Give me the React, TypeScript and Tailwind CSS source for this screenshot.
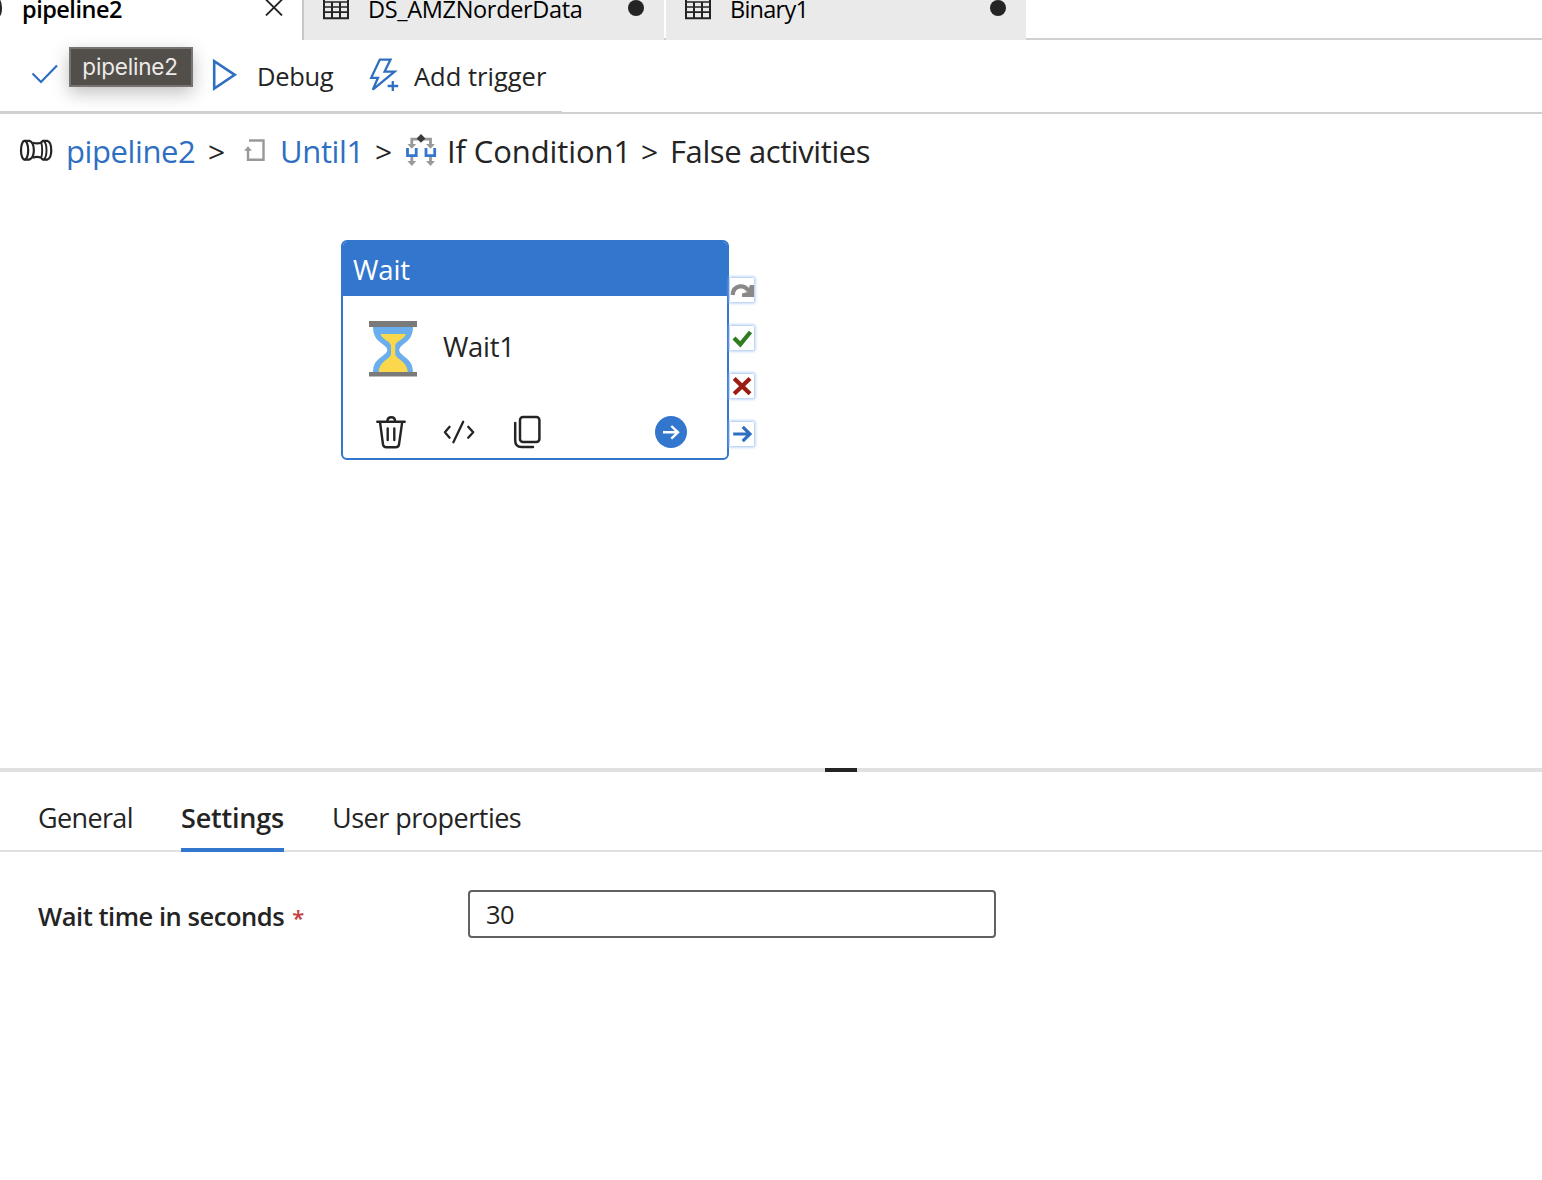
import type { ReactNode } from 'react'

const ink = '#242424'
const blue = '#2f6fc1'

function TableIcon() {
  return (
    <svg className="block h-5 w-[26px] shrink-0" viewBox="0 0 26 20" fill="none" stroke={ink}>
      <path d="M1 0V18.2H25V0" strokeWidth="2" />
      <path d="M0 2H26M1 7H25M1 12.2H25" strokeWidth="1.7" />
      <path d="M9 2V18M17 2V18" strokeWidth="2" />
    </svg>
  )
}

function FileTab({ label, tracking }: { label: string; tracking: string }) {
  return (
    <div className="flex h-10 w-[360px] items-start bg-[#eaeaea] pr-5 pl-[19px]">
      <TableIcon />
      <span className={`ml-[19px] h-[18px] flex-1 text-[23.5px] leading-[18px] text-black ${tracking}`}>{label}</span>
      <span className="size-4 rounded-full bg-[#242424]" />
    </div>
  )
}

function TabBar() {
  return (
    <div className="flex h-10">
      <div className="flex w-[302px] items-start">
        <svg className="block h-5 w-[22px]" viewBox="0 0 22 20" fill="none" stroke={ink} strokeWidth="2">
          <path d="M-2 -1C2 2 2 14 -2 17" />
        </svg>
        <span className="h-[18px] flex-1 text-[23.5px] leading-[18px] font-semibold tracking-[-0.5px] text-black">
          pipeline2
        </span>
        <svg className="mr-[19px] block h-4 w-[18px]" viewBox="0 0 18 16" fill="none" stroke={ink} strokeWidth="1.8">
          <path d="M1 -0.5L17 15.5M17 -0.5L1 15.5" />
        </svg>
      </div>
      <div className="w-0.5 bg-[#c8c8c8]" />
      <FileTab label="DS_AMZNorderData" tracking="tracking-[-0.33px]" />
      <div className="w-0.5 border-b-2 border-[#d0d0d0]" />
      <FileTab label="Binary1" tracking="tracking-[-0.75px]" />
      <div className="flex-1 border-b-2 border-[#d0d0d0]" />
    </div>
  )
}

function Toolbar() {
  return (
    <div className="relative flex h-[74px] items-start text-[25.5px] leading-[36px] text-[#242424]">
      <svg className="mt-[20px] ml-[30px] block h-8 w-[30px]" viewBox="30 60 30 32" fill="none" stroke={blue} strokeWidth="2.2">
        <path d="M32.5 73.5L41 82L57 65.5" />
      </svg>
      <svg className="mt-[16px] ml-[150px] block h-9 w-7" viewBox="210 56 28 36" fill="none" stroke={blue} strokeWidth="2.6">
        <path d="M214.2 61.2V88.5L234.7 74.8Z" />
      </svg>
      <span className="mt-[18px] ml-[19px] w-[111px] tracking-[-0.3px]">Debug</span>
      <svg className="mt-[16px] block h-9 w-8" viewBox="368 56 32 36" fill="none" stroke={blue} strokeWidth="2.3">
        <path d="M379.8 59.6H390.5L384.6 71.6H394.6L372.8 89.6L378 77.8H371.2Z" />
        <path d="M387.6 86H398.2M392.8 81V91" strokeWidth="2.3" />
      </svg>
      <span className="mt-[18px] ml-[14px]">Add trigger</span>
      <div className="absolute top-[7px] left-[69px] flex h-10 w-[124px] items-center justify-center border-2 border-[#777370] bg-[#524e4a] font-['Inter'] text-[22.5px] leading-none tracking-[-0.2px] text-[#eceae8] shadow-[0_6px_18px_rgba(0,0,0,0.25)]">
        <span className="mr-0.5">pipeline2</span>
      </div>
      <div className="absolute bottom-0 left-0 h-[3px] w-[562px] bg-[#d0d0d0]" />
      <div className="absolute right-0 bottom-0 left-0 h-0.5 bg-[#d0d0d0]" />
    </div>
  )
}

function PipelineIcon() {
  return (
    <svg className="block h-[26px] w-9 shrink-0" viewBox="18 138 36 26" fill="none" stroke={ink} strokeWidth="2.2">
      <ellipse cx="24.6" cy="150.2" rx="3.6" ry="9.4" />
      <path d="M24.6 140.8H29.2C35.4 143 35.4 157.4 29.2 159.6H24.6" />
      <path d="M33 142.8C35.5 143.6 38.5 143.6 41 142.8M33 157.6C35.5 156.8 38.5 156.8 41 157.6" />
      <path d="M41 142.2C42.6 146 42.6 154.5 41 158.2" strokeWidth="1.9" />
      <path d="M41 142.4L43 140.8H47.2C52.6 142.5 52.6 157.9 47.2 159.6H43L41 158" />
      <path d="M43.8 141C47.4 144 47.4 156.4 43.8 159.4" strokeWidth="1.9" />
    </svg>
  )
}

function UntilIcon() {
  return (
    <svg className="block h-[26px] w-6 shrink-0" viewBox="242 138 24 26" fill="none" stroke="#999" strokeWidth="2.4">
      <path d="M249 140.5H263.5V159.7H248V149" />
      <path d="M248 146.3L252 150.8H244Z" fill="#999" stroke="none" />
    </svg>
  )
}

function ConditionIcon() {
  return (
    <svg className="block h-9 w-8 shrink-0" viewBox="405 133 32 36" fill="none">
      <path d="M411.8 145V139.2H430.5V145M411.8 156V162M430.5 156V162" stroke="#999" strokeWidth="2.8" />
      <path d="M407.4 144H416.2L411.8 148.8ZM426.1 144H434.9L430.5 148.8ZM407.4 161H416.2L411.8 166ZM426.1 161H434.9L430.5 166Z" fill="#999" />
      <path d="M407.5 148V155.6H416.2V148M426 148V155.6H434.7V148" stroke="#3376cd" strokeWidth="2.8" />
      <path d="M421 134L425.4 138.4L421 142.8L416.6 138.4Z" fill="#3b3b3b" />
    </svg>
  )
}

function Separator({ width }: { width: string }) {
  return <span className={`pt-0.5 text-[30px] leading-10 font-medium ${width}`}>&gt;</span>
}

function Breadcrumb() {
  return (
    <div className="flex h-[74px] items-center text-[31px] leading-10 whitespace-nowrap text-[#242424]">
      <div className="ml-[18px] w-[48px]"><PipelineIcon /></div>
      <span className="w-[142px] tracking-[-0.4px] text-[#2f6fc1]">pipeline2</span>
      <Separator width="w-[34px]" />
      <div className="w-[38px]"><UntilIcon /></div>
      <span className="w-[95px] tracking-[-0.35px] text-[#2f6fc1]">Until1</span>
      <Separator width="w-[30px]" />
      <div className="w-[42px]"><ConditionIcon /></div>
      <span className="w-[194px] tracking-[-0.1px]">If Condition1</span>
      <Separator width="w-[29px]" />
      <span className="tracking-[-0.4px]">False activities</span>
    </div>
  )
}

function Hourglass() {
  return (
    <svg className="block h-14 w-12" viewBox="369 321 48 56">
      <path d="M373 326H413C413 340 406 341 400.5 347C398.8 349 398.8 351 400.5 353C406 359 413 360 413 373H373C373 360 380 359 386 353C387.8 351 387.8 349 386 347C380 341 373 340 373 326Z" fill="#6aaeee" />
      <path d="M380.5 334H406C404 340 395.5 341 395.2 346V354C395.5 359 407.5 361 407.8 372.5H378.8C379 361 390.7 359 391 354V346C390.7 341 382.5 340 380.5 334Z" fill="#fbd84b" />
      <path d="M369 321H417V327H369ZM369 372H417V376.5H369Z" fill="#7a7a7a" />
    </svg>
  )
}

function Badge({ children }: { children: ReactNode }) {
  return (
    <div className="size-6 bg-white shadow-[0_0_3px_1px_#9dbdf0]">
      <svg className="block size-6" viewBox="0 0 24 24" fill="none">{children}</svg>
    </div>
  )
}

function WaitNode() {
  return (
    <div className="absolute top-[52px] left-[341px] flex">
      <div className="flex h-[220px] w-[388px] flex-col overflow-hidden rounded-[6px] border-2 border-[#3376cd] bg-white">
        <div className="h-[54px] bg-[#3376cd] pl-2.5 text-[27.5px] leading-[55px] tracking-[-0.1px] text-white">
          Wait
        </div>
        <div className="flex h-[119px] pt-[25px] pl-[26px]">
          <Hourglass />
          <span className="ml-[26px] h-[52px] text-[27.5px] leading-[52px] tracking-[-0.3px] text-[#242424]">Wait1</span>
        </div>
        <div className="flex items-center pl-8">
          <svg className="block h-[34px] w-8" viewBox="375 415 32 34" fill="none" stroke={ink} strokeWidth="2.4" strokeLinecap="round" strokeLinejoin="round">
            <path d="M377.3 421.8H404.7M387.3 421.5C387.5 415.8 395 415.8 395.2 421.5M380 422L383 444.5Q383.5 447.2 386.3 447.2H395.8Q398.6 447.2 399 444.5L402.2 422M387.7 428.5V440M394.3 428.5V440" />
          </svg>
          <svg className="ml-9 block h-[34px] w-8" viewBox="443 415 32 34" fill="none" stroke={ink} strokeWidth="2.3" strokeLinecap="round" strokeLinejoin="round">
            <path d="M449.6 426.8L444.9 432.3L449.6 437.7M463.2 421.8L453.4 442.2M468.2 426.8L473.2 432.3L468.2 437.7" />
          </svg>
          <svg className="ml-9 block h-[34px] w-8" viewBox="511 415 32 34" fill="none" stroke={ink} strokeWidth="2.5" strokeLinecap="round">
            <rect x="520" y="417" width="19.4" height="25" rx="3" />
            <path d="M515.2 423V440.5Q515.2 447 521.7 447H533" />
          </svg>
          <svg className="ml-[112px] block size-8" viewBox="655 416 32 32" fill="none">
            <circle cx="671" cy="432" r="16" fill="#3376cd" />
            <path d="M663 432.3H678M671.3 426L678 432.3L671.3 438.6" stroke="white" strokeWidth="2.4" />
          </svg>
        </div>
      </div>
      <div className="mt-[38px] ml-[1px] flex flex-col gap-6">
        <Badge>
          <path d="M2.6 17C3.5 6.5 15 6 18.5 13" stroke="#8b8987" strokeWidth="4.2" />
          <path d="M24 7V19H12V15.5L17.5 14L20 7Z" fill="#8b8987" />
        </Badge>
        <Badge><path d="M4 12L10.3 18.3L20.5 6" stroke="#2f7d1f" strokeWidth="4.2" /></Badge>
        <Badge><path d="M4.2 4.5L20 19.8M20 4.5L4.2 19.8" stroke="#9b1c12" strokeWidth="4.2" /></Badge>
        <Badge><path d="M3.2 12H20M12.7 4.8L20 12L12.7 19.2" stroke={blue} strokeWidth="3.2" /></Badge>
      </div>
    </div>
  )
}

function PropertiesPanel() {
  return (
    <div>
      <div className="flex h-1 bg-[#e0e0e0]">
        <div className="ml-[825px] w-8 bg-[#242424]" />
      </div>
      <div className="flex h-20 border-b-2 border-[#e0e0e0] pl-[38px] text-[27px] leading-[91px] text-[#242424]">
        <span className="w-[143px] tracking-[-0.65px]">General</span>
        <span className="h-20 w-[103px] border-b-4 border-[#3376cd] font-semibold tracking-[-0.2px]">Settings</span>
        <span className="ml-12 tracking-[-0.5px]">User properties</span>
      </div>
      <div className="flex pt-[38px] pl-[38px] text-[#242424]">
        <div className="w-[430px] text-[25.5px] leading-[52px] font-semibold tracking-[-0.46px]">
          Wait time in seconds <span className="ml-0.5 text-[22px] text-[#c43c3c]">*</span>
        </div>
        <input
          className="h-12 w-[528px] rounded-[4px] border-2 border-[#616161] px-4 text-[25.5px] tracking-[-0.5px] outline-none"
          defaultValue="30"
        />
      </div>
    </div>
  )
}

export default function App() {
  return (
    <div className="flex h-[1180px] w-[1542px] flex-col overflow-hidden bg-white font-['Open_Sans',sans-serif]">
      <TabBar />
      <Toolbar />
      <Breadcrumb />
      <div className="relative h-[580px]">
        <WaitNode />
      </div>
      <PropertiesPanel />
    </div>
  )
}
